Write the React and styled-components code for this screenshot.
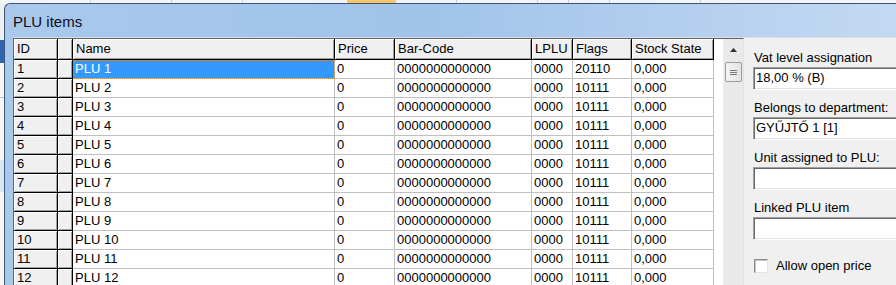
import React from 'react';
import styled, { createGlobalStyle } from 'styled-components';

const GlobalStyle = createGlobalStyle`
  html, body {
    margin: 0;
    padding: 0;
    height: 285px;
    overflow: hidden;
    background: #f6f7f9;
  }
  body {
    font-family: 'Liberation Sans', Arial, sans-serif;
    font-size: 13px;
    color: #000;
  }
`;

const Desktop = styled.div`
  width: 896px;
  height: 285px;
  overflow: hidden;
  background:
    linear-gradient(to bottom, #eef1f5 0 40px, #2f66b3 40px 63px, #f7f7f7 63px 97px,
      #b9c9dd 97px 98px, #f7f7f7 98px 160px, #dbe6f3 160px 192px, #f7f7f7 192px)
      left top / 4px 100% no-repeat,
    #f7f7f7;
`;

const BackdropBar = styled.div`
  display: flex;
  height: 3px;
  background: #f1f4f8;
`;

const BackdropCell = styled.div`
  flex: none;
  width: ${p => p.$w}px;
  border-right: 1px solid #c9d3df;
  background: ${p => (p.$hot ? '#f4c56b' : 'transparent')};
`;

const Window = styled.div`
  margin-left: 4px;
  width: 940px;
  height: 320px;
  display: flex;
  flex-direction: column;
  border-top: 1px solid #3d5676;
  border-left: 1px solid #3d5676;
  border-radius: 6px 0 0 0;
  background: linear-gradient(90deg, #a9c8ec 0%, #a1c3ea 45%, #b6d0ee 75%, #c6dcf3 100%);
`;

const TitleBar = styled.div`
  height: 33px;
  display: flex;
  align-items: center;
  padding-left: 8px;
  padding-top: 2px;
  box-sizing: border-box;
  font-size: 15px;
  color: #0c0c18;
`;

const Client = styled.div`
  flex: 1;
  margin-left: 8px;
  display: flex;
  align-items: flex-start;
  background: #f0f0f0;
  border-top: 1px solid #d4e0ee;
`;

const GridArea = styled.div`
  flex: none;
  display: flex;
  background: #fff;
  border-top: 1px solid #646464;
  border-left: 1px solid #646464;
  border-right: 1px solid #e3e3e3;
  height: 260px;
`;

const Table = styled.div`
  width: 709px;
  display: flex;
  flex-direction: column;
`;

const Row = styled.div`
  display: flex;
`;

const HeaderCell = styled.div`
  flex: none;
  box-sizing: border-box;
  width: ${p => p.$w + 1}px;
  height: 21px;
  line-height: 20px;
  padding-left: 3px;
  background: #f0f0f0;
  border-right: 1px solid #000;
  border-bottom: 1px solid #000;
  box-shadow: inset 1px 1px 0 #fff, inset -1px -1px 0 #a0a0a0;
  white-space: nowrap;
  overflow: hidden;
`;

const FixedCell = styled(HeaderCell)`
  height: 19px;
  line-height: 18px;
`;

const DataCell = styled.div`
  flex: none;
  box-sizing: border-box;
  width: ${p => p.$w + 1}px;
  height: 19px;
  line-height: 18px;
  padding-left: 2px;
  border-right: 1px solid #c0c0c0;
  border-bottom: 1px solid #c0c0c0;
  white-space: nowrap;
  overflow: hidden;
  background: ${p => (p.$selected ? '#3399ff' : '#fff')};
  color: ${p => (p.$selected ? '#fff' : '#000')};
  outline: ${p => (p.$selected ? '1px dotted #c98a2b' : 'none')};
  outline-offset: -1px;
`;

const Filler = styled.div`
  flex: 1;
  background: #fff;
`;

const ScrollBar = styled.div`
  width: 20px;
  display: flex;
  flex-direction: column;
  align-items: center;
  background: #e9e9e9;
`;

const ArrowButton = styled.div`
  width: 20px;
  height: 21px;
  display: flex;
  align-items: center;
  justify-content: center;
`;

const Thumb = styled.div`
  margin-top: 2px;
  width: 17px;
  height: 20px;
  box-sizing: border-box;
  border: 1px solid #9b9b9b;
  border-radius: 2px;
  background: linear-gradient(90deg, #f3f3f3, #e4e4e4);
  display: flex;
  align-items: center;
  justify-content: center;
`;

const Panel = styled.div`
  flex: 1;
  display: flex;
  flex-direction: column;
  padding: 12px 0 0 9px;
`;

const Label = styled.div`
  height: 15px;
  line-height: 15px;
  margin: 0 0 2px 1px;
  white-space: nowrap;
`;

const Field = styled.div`
  width: 200px;
  height: 23px;
  box-sizing: border-box;
  margin-bottom: 10px;
  padding-left: 2px;
  line-height: 19px;
  background: #fff;
  border: 1px solid;
  border-color: #a0a0a0 #fff #fff #a0a0a0;
  box-shadow: inset 1px 1px 0 #696969, inset -1px -1px 0 #e3e3e3;
  white-space: nowrap;
`;

const CheckRow = styled.div`
  display: flex;
  align-items: center;
  gap: 8px;
  margin: 8px 0 0 1px;
`;

const CheckBox = styled.div`
  width: 14px;
  height: 14px;
  box-sizing: border-box;
  background: #fff;
  border: 1px solid;
  border-color: #8a8a8a #e3e3e3 #e3e3e3 #8a8a8a;
  box-shadow: inset 1px 1px 0 #c8c8c8;
`;

const columns = [
  { key: 'id', w: 43, label: 'ID', fixed: true },
  { key: 'mark', w: 14, label: '', fixed: true },
  { key: 'name', w: 261, label: 'Name' },
  { key: 'price', w: 59, label: 'Price' },
  { key: 'bar', w: 136, label: 'Bar-Code' },
  { key: 'lplu', w: 40, label: 'LPLU' },
  { key: 'flags', w: 58, label: 'Flags' },
  { key: 'stock', w: 81, label: 'Stock State' },
];

const rows = Array.from({ length: 12 }, (_, i) => ({
  id: String(i + 1),
  mark: '',
  name: `PLU ${i + 1}`,
  price: '0',
  bar: '0000000000000',
  lplu: '0000',
  flags: i === 0 ? '20110' : '10111',
  stock: '0,000',
}));

const backdrop = [90, 80, 70, 104, 47, 60, 80, 30, 40, 90, 300];

const App = () => {
  return (
    <>
      <GlobalStyle />
      <Desktop>
        <BackdropBar>
          {backdrop.map((w, i) => (
            <BackdropCell key={i} $w={w} $hot={i === 4} />
          ))}
        </BackdropBar>
        <Window>
          <TitleBar>PLU items</TitleBar>
          <Client>
            <GridArea>
              <Table>
                <Row>
                  {columns.map(c => (
                    <HeaderCell key={c.key} $w={c.w}>{c.label}</HeaderCell>
                  ))}
                  <Filler />
                </Row>
                {rows.map((r, ri) => (
                  <Row key={r.id}>
                    {columns.map(c =>
                      c.fixed ? (
                        <FixedCell key={c.key} $w={c.w}>{r[c.key]}</FixedCell>
                      ) : (
                        <DataCell key={c.key} $w={c.w} $selected={ri === 0 && c.key === 'name'}>
                          {r[c.key]}
                        </DataCell>
                      )
                    )}
                    <Filler />
                  </Row>
                ))}
              </Table>
              <ScrollBar>
                <ArrowButton>
                  <svg width="7" height="4" viewBox="0 0 7 4">
                    <path d="M0 4 L3.5 0 L7 4 Z" fill="#333" />
                  </svg>
                </ArrowButton>
                <Thumb>
                  <svg width="7" height="7" viewBox="0 0 7 7">
                    <path d="M0 1.5 H7 M0 3.5 H7 M0 5.5 H7" stroke="#7a7a7a" strokeWidth="1" />
                  </svg>
                </Thumb>
              </ScrollBar>
            </GridArea>
            <Panel>
              <Label>Vat level assignation</Label>
              <Field>18,00 % (B)</Field>
              <Label>Belongs to department:</Label>
              <Field>GYŰJTŐ 1 [1]</Field>
              <Label>Unit assigned to PLU:</Label>
              <Field />
              <Label>Linked PLU item</Label>
              <Field />
              <CheckRow>
                <CheckBox />
                <span>Allow open price</span>
              </CheckRow>
            </Panel>
          </Client>
        </Window>
      </Desktop>
    </>
  );
};

export default App;
